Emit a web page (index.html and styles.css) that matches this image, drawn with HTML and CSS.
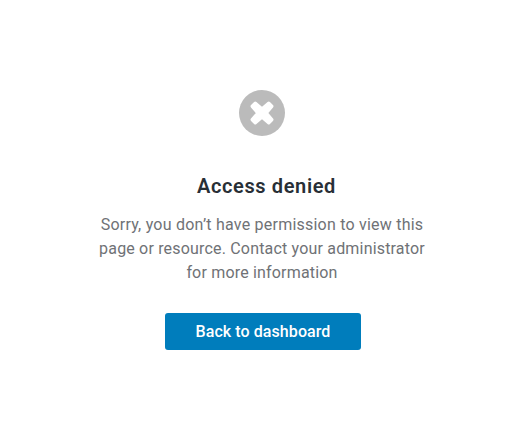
FILE: index.html
```html
<!DOCTYPE html>
<html lang="en">
<head>
<meta charset="utf-8">
<title>Access denied</title>
<link rel="stylesheet" href="styles.css">
</head>
<body>
<main class="denied">
<svg class="icon" viewBox="0 0 46 46" aria-hidden="true"><circle cx="23" cy="23" r="23" fill="#bbb"/><path d="M16.300 13.300 23 19 29.700 13.300 32.700 16.300 27 23 32.700 29.700 29.700 32.700 23 27 16.300 32.700 13.300 29.700 19 23 13.300 16.300Z" fill="#fff" stroke="#fff" stroke-width="3.500" stroke-linejoin="round"/></svg>
<h1 class="title">Access denied</h1>
<p class="message"><span class="line line-a">Sorry, you don’t have permission to view this</span><span class="line line-b">page or resource. Contact your administrator</span><span class="line line-c">for more information</span></p>
<a class="button" href="#">Back to dashboard</a>
</main>
</body>
</html>
```
FILE: styles.css
```css
body { margin: 0; background: #fff; font-family: Roboto, sans-serif; }
.denied { display: flex; flex-direction: column; align-items: center; padding: 90px 8px 0 0; }
.icon { width: 46px; height: 46px; }
.title { margin: 36px 0 0 9px; font-size: 20px; line-height: 28px; font-weight: 600; letter-spacing: 0.62px; color: #282f36; white-space: nowrap; }
.message { margin: 13px 0 0; font-size: 16px; line-height: 24px; color: #6f7276; text-align: center; }
.line { display: block; white-space: nowrap; letter-spacing: 0.18px; }
.line-a { letter-spacing: 0.22px; }
.button { display: flex; align-items: center; justify-content: center; width: 196px; height: 37px; margin: 28px 0 0 2px; border-radius: 3px; background: #007dbc; color: #fff; font-size: 16px; font-weight: 500; letter-spacing: 0.08px; text-decoration: none; white-space: nowrap; }
```
